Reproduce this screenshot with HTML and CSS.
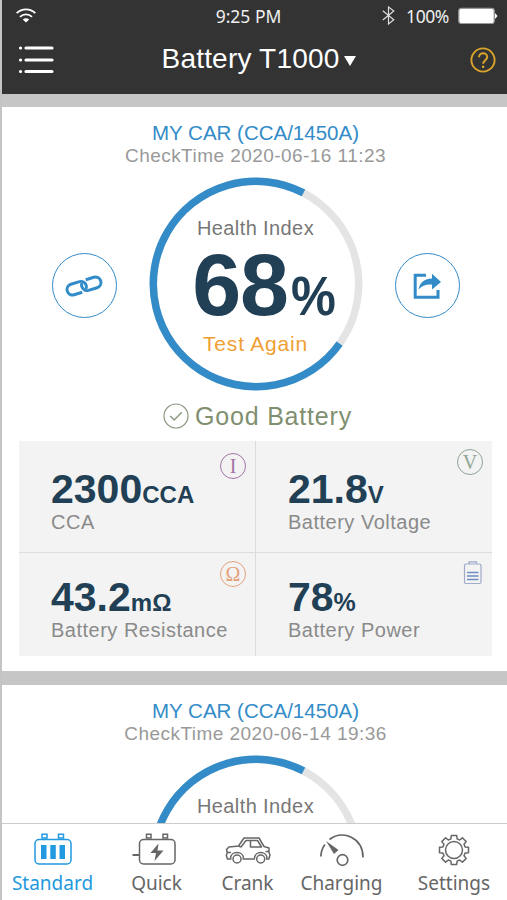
FILE: index.html
```html
<!DOCTYPE html>
<html lang="en">
<head>
  <meta charset="utf-8">
  <title>Battery T1000</title>
  <link rel="stylesheet" href="styles.css">
</head>
<body>
  <div class="phone">
    <header class="header">
      <div class="status">
        <svg class="wifi" width="20" height="16" viewBox="0 0 20 16" fill="none" stroke="#fff" stroke-width="1.8">
          <path d="M.7 5.2a13.2 13.2 0 0 1 18.6 0"/>
          <path d="M4 8.8a8.6 8.6 0 0 1 12 0"/>
          <path d="M6.8 11.6a4.6 4.6 0 0 1 6.4 0L10 14.6z" fill="#fff" stroke="none"/>
        </svg>
        <span class="clock">9:25 PM</span>
        <div class="status-right">
          <svg width="13" height="19" viewBox="0 0 13 19" fill="none" stroke="#ddd" stroke-width="1.2">
            <path d="M.8 4.8l11 9-5.3 4.2V1l5.3 4-11 9"/>
          </svg>
          <span class="percent">100%</span>
          <svg width="40" height="18" viewBox="0 0 40 18">
            <rect x=".8" y="1.3" width="35.4" height="15.2" rx="2.5" fill="#fff" stroke="#999" stroke-width="1.2"/>
            <path d="M37 6l2.500 3-2.500 3z" fill="#fff"/>
          </svg>
        </div>
      </div>
      <div class="navbar">
        <svg width="37" height="30" viewBox="0 0 37 30" stroke="#fff" stroke-width="3.200" stroke-linecap="round">
          <path d="M9 3h26M9 15h26M9 26.500h26M3.500 3h.1M3.500 15h.1M3.500 26.500h.1"/>
        </svg>
        <h1 class="title">Battery T1000 <span class="arrow"></span></h1>
        <svg width="26" height="26" viewBox="0 0 26 26" fill="none" stroke="#d9a22b" stroke-width="1.900">
          <circle cx="13" cy="13" r="11.600"/>
          <path d="M9 10.300c0-5.400 8.200-5 8.200-.3 0 3-4 3.400-4 6.700" stroke-width="2"/>
          <path d="M13.100 18.700v2.300" stroke-width="2.200"/>
        </svg>
      </div>
    </header>

    <main class="list">
      <section class="card">
        <h2 class="car">MY CAR (CCA/1450A)</h2>
        <p class="time">CheckTime 2020-06-16 11:23</p>
        <div class="health">
          <a class="round" href="#">
            <svg width="40" height="26" viewBox="0 0 40 26" fill="none" stroke="#338cc8" stroke-width="3">
              <g transform="rotate(-17 20 13)">
                <path d="M16.500 18.500H8a5.500 5.500 0 0 1 0-11h9a5.500 5.500 0 0 1 5.300 5.500q0 2-1.300 3.500"/>
                <path d="M23.500 7.500H32a5.500 5.500 0 0 1 0 11h-9a5.500 5.500 0 0 1-5.300-5.500q0-2 1.300-3.500"/>
              </g>
            </svg>
          </a>
          <div class="gauge">
            <svg class="ring" width="214" height="214" viewBox="0 0 214 214" fill="none" stroke-width="7.500">
              <circle cx="107" cy="107" r="102.700" stroke="#e4e4e4"/>
              <path d="M190.600 166.600A102.700 102.700 0 1 1 154.500 15.900" stroke="#338cc8"/>
            </svg>
            <span class="index">Health Index</span>
            <span class="score">68<small>%</small></span>
            <a class="again" href="#">Test Again</a>
          </div>
          <a class="round" href="#">
            <svg width="30" height="28" viewBox="0 0 30 28">
              <path d="M14 3.200H3.200v22H26V18" fill="none" stroke="#338cc8" stroke-width="3"/>
              <path d="M6.500 17.500C8 10 13 6.500 20 6.500V1.800l9 8.200-9 7.500v-5C14.500 12 10 13.500 6.500 17.500z" fill="#338cc8"/>
            </svg>
          </a>
        </div>
        <div class="result">
          <svg width="26" height="26" viewBox="0 0 26 26" fill="none" stroke="#8b9a83">
            <circle cx="13" cy="13" r="12" stroke-width="1.200"/>
            <path d="M7.200 13l4 4 7.600-7.700" stroke-width="1.500"/>
          </svg>
          <span>Good Battery</span>
        </div>
        <div class="stats">
          <div class="stat">
            <b class="value">2300<small>CCA</small></b>
            <span class="label">CCA</span>
            <i class="badge current">I</i>
          </div>
          <div class="stat">
            <b class="value">21.8<small>V</small></b>
            <span class="label">Battery Voltage</span>
            <i class="badge voltage">V</i>
          </div>
          <div class="stat">
            <b class="value">43.2<small>mΩ</small></b>
            <span class="label">Battery Resistance</span>
            <i class="badge ohm">Ω</i>
          </div>
          <div class="stat">
            <b class="value">78<small class="narrow">%</small></b>
            <span class="label">Battery Power</span>
            <svg class="power" width="20" height="24" viewBox="0 0 20 24" fill="none" stroke="#9eabc9" stroke-width="1.200">
              <rect x="1.500" y="3" width="16.500" height="19.500" rx="1.500"/>
              <path d="M6 3V.8h7.500V3"/>
              <path d="M4 11.500h11.500M4 15h11.500M4 18.500h11.500" stroke="#6f8fc4" stroke-width="1.400"/>
            </svg>
          </div>
        </div>
      </section>

      <section class="card">
        <h2 class="car">MY CAR (CCA/1450A)</h2>
        <p class="time">CheckTime 2020-06-14 19:36</p>
        <div class="health">
          <div class="gauge">
            <svg class="ring" width="214" height="214" viewBox="0 0 214 214" fill="none" stroke-width="7.500">
              <circle cx="107" cy="107" r="102.700" stroke="#e4e4e4"/>
              <path d="M190.600 166.600A102.700 102.700 0 1 1 154.500 15.900" stroke="#338cc8"/>
            </svg>
            <span class="index">Health Index</span>
          </div>
        </div>
      </section>
    </main>

    <nav class="tabs">
      <a class="tab active" href="#">
        <svg width="50" height="36" viewBox="0 0 50 36" fill="none" stroke="currentColor" stroke-width="1.500">
          <rect x="7" y="8.500" width="36" height="24.500" rx="4"/>
          <path d="M14 7V3.200h5V7zM30.500 7V3.200h5V7z"/>
          <path d="M13 14h5.500v14H13zM22.300 14h5.500v14h-5.500zM31.500 14H37v14h-5.500z" fill="currentColor" stroke="none"/>
        </svg>
        <span>Standard</span>
      </a>
      <a class="tab" href="#">
        <svg width="50" height="36" viewBox="0 0 50 36" fill="none" stroke="currentColor" stroke-width="1.500">
          <rect x="7.500" y="8.500" width="35.500" height="24.500" rx="4"/>
          <path d="M14.500 7V3.200h4.500V7zM31 7V3.200h4.500V7z"/>
          <path d="M.5 24H7" stroke-width="2"/>
          <path d="M26.500 12.500L18.500 22h5.500l-1.500 8 9-10.500h-6z" fill="currentColor" stroke="none"/>
        </svg>
        <span>Quick</span>
      </a>
      <a class="tab" href="#">
        <svg width="50" height="36" viewBox="0 0 50 36" fill="none" stroke="currentColor" stroke-width="1.500" stroke-linejoin="round">
          <path d="M8.500 28H4.500L3.300 24.500l1-3-.8-3L6 16l9.500-1 5.500-8h15l5 8.500 5 1.500v4.500l1 2.500-1.200 4H43M19.500 28H32"/>
          <path d="M18 16l5-6.500h4.500V16h11L34.500 9.500h-7M15.500 15l2.500 1M4.300 21.500H8M42.500 20.500H46"/>
          <path d="M7.500 27.500c0-8 13-8 13 0M31.500 27.500c0-8 12.500-8 12.500 0"/>
          <circle cx="14" cy="28" r="4"/>
          <circle cx="37.700" cy="28" r="4"/>
        </svg>
        <span>Crank</span>
      </a>
      <a class="tab" href="#">
        <svg width="50" height="36" viewBox="0 0 50 36" fill="none" stroke="currentColor" stroke-width="1.700">
          <path d="M3.800 25.500q.3-6.500 4-12M12.500 8.500C26-2 46 7 46 26.500"/>
          <circle cx="25.500" cy="29" r="5.300"/>
          <path d="M9 10l12.500 9-4.500 4z" fill="currentColor" stroke="none"/>
        </svg>
        <span>Charging</span>
      </a>
      <a class="tab" href="#">
        <svg width="50" height="36" viewBox="0 0 50 36" fill="none" stroke="currentColor" stroke-width="1.500" stroke-linejoin="round">
          <path d="M21.900 7.900L22.300 4.500L27.700 4.500L28.100 7.900L30.700 9L33.400 6.800L37.200 10.600L35 13.300L36.100 15.900L39.500 16.300L39.500 21.700L36.100 22.100L35 24.700L37.200 27.400L33.400 31.200L30.700 29L28.100 30.100L27.700 33.500L22.300 33.500L21.900 30.100L19.300 29L16.600 31.200L12.800 27.400L15 24.700L13.900 22.100L10.500 21.700L10.500 16.300L13.900 15.900L15 13.300L12.800 10.600L16.600 6.800L19.300 9z"/>
          <circle cx="25" cy="19" r="8.500"/>
        </svg>
        <span>Settings</span>
      </a>
    </nav>
  </div>
</body>
</html>
```
FILE: styles.css
```css
* {
    box-sizing: border-box;
}

body {
    margin: 0;
    font-family: "Liberation Sans", Arial, sans-serif;
}

a {
    color: inherit;
    text-decoration: none;
}

svg {
    display: block;
    flex: none;
}

.phone {
    display: flex;
    flex-direction: column;
    width: 507px;
    height: 900px;
    overflow: hidden;
    border-left: 2px solid #c4c4c4;
    background: #c6c6c6;
}

/* header */
.header {
    flex: none;
    height: 94px;
    background: #333;
    color: #fff;
}

.status {
    display: grid;
    grid-template-columns: 1fr auto 1fr;
    align-items: center;
    height: 31px;
    padding: 0 9px 0 14px;
    font-family: "Noto Sans", sans-serif;
    font-size: 17.5px;
    color: #f0f0f0;
}

.clock {
    padding-right: 17px;
}

.status-right {
    display: flex;
    align-items: center;
    justify-content: flex-end;
}

.percent {
    margin: 0 9px 0 11px;
    letter-spacing: -0.4px;
}

.navbar {
    display: flex;
    align-items: center;
    justify-content: space-between;
    height: 58px;
    padding: 0 11px 0 15px;
}

.title {
    display: flex;
    align-items: center;
    margin: 0 6px 3px 0;
    font-size: 28px;
    font-weight: normal;
    line-height: 32px;
    letter-spacing: 0.2px;
}

.arrow {
    margin: 5px 0 0 5px;
    border: 6.500px solid transparent;
    border-top: 10px solid #fff;
    border-bottom: 0;
}

/* cards */
.list {
    flex: 1;
    min-height: 0;
    overflow: hidden;
    padding-top: 13px;
}

.card {
    height: 564px;
    margin-bottom: 14px;
    padding: 14px 15px 0 17px;
    background: #fff;
    text-align: center;
}

.car {
    margin: 0;
    font-size: 20.5px;
    font-weight: normal;
    line-height: 24px;
    color: #338cc8;
}

.time {
    margin: 0;
    font-size: 19px;
    line-height: 22px;
    letter-spacing: 0.45px;
    color: #999;
}

.health {
    display: flex;
    align-items: center;
    justify-content: center;
    gap: 32px;
    height: 214px;
    margin-top: 10px;
}

.round {
    display: flex;
    align-items: center;
    justify-content: center;
    width: 65px;
    height: 65px;
    margin-top: 3px;
    border: 1.500px solid #338cc8;
    border-radius: 50%;
}

.gauge {
    position: relative;
    display: flex;
    flex-direction: column;
    align-items: center;
    width: 214px;
    height: 214px;
    padding-top: 40px;
}

.ring {
    position: absolute;
    top: 0;
    left: 0;
}

.index {
    font-size: 20px;
    line-height: 22px;
    letter-spacing: 0.4px;
    color: #777;
}

.score {
    height: 93px;
    padding-left: 21px;
    font-size: 88px;
    font-weight: bold;
    line-height: 92px;
    letter-spacing: -1px;
    color: #213f55;
}

.score small {
    display: inline-block;
    margin-left: 3px;
    font-size: 56px;
    transform: scaleX(0.9);
    transform-origin: left;
}

.again {
    font-size: 21px;
    line-height: 24px;
    letter-spacing: 0.8px;
    color: #f0a033;
}

.result {
    display: flex;
    align-items: center;
    justify-content: center;
    gap: 6px;
    height: 50px;
    padding-left: 4px;
    font-size: 25px;
    letter-spacing: 0.8px;
    color: #7f8f70;
}

/* stats */
.stats {
    display: grid;
    grid-template-columns: 236px 236px;
    grid-template-rows: 111px 103px;
    gap: 1px;
    background: #dcdcdc;
}

.stat {
    position: relative;
    padding: 25px 0 0 32px;
    background: #f3f3f3;
    text-align: left;
}

.stat:nth-child(n+3) {
    padding-top: 21px;
}

.value {
    display: block;
    height: 46px;
    font-size: 41px;
    line-height: 46px;
    color: #213f55;
}

.value small {
    font-size: 24px;
}

.value .narrow {
    font-size: 25px;
    letter-spacing: -1px;
}

.label {
    display: block;
    margin-top: -1px;
    font-size: 20px;
    line-height: 23px;
    letter-spacing: 0.5px;
    color: #8a8a8a;
}

.badge {
    position: absolute;
    top: 12px;
    right: 9px;
    width: 26px;
    height: 26px;
    border: 1.500px solid;
    border-radius: 50%;
    font-family: "Liberation Serif", serif;
    font-size: 20px;
    font-style: normal;
    line-height: 24px;
    text-align: center;
}

.current {
    color: #a274a4;
}

.voltage {
    top: 8px;
    color: #8fa494;
}

.ohm {
    top: 8px;
    color: #e3a27c;
}

.power {
    position: absolute;
    top: 8px;
    right: 9px;
}

/* bottom tabs */
.tabs {
    display: grid;
    grid-template-columns: 101px 107px 75px 113px 112px;
    flex: none;
    height: 77px;
    padding-top: 7px;
    border-top: 1.500px solid #ccc;
    background: #fff;
}

.tab {
    display: flex;
    flex-direction: column;
    align-items: center;
    font-family: "Noto Sans", sans-serif;
    font-size: 19px;
    line-height: 28px;
    color: #666;
}

.tab span {
    margin-top: 2px;
}

.active {
    color: #2299e0;
}
```
